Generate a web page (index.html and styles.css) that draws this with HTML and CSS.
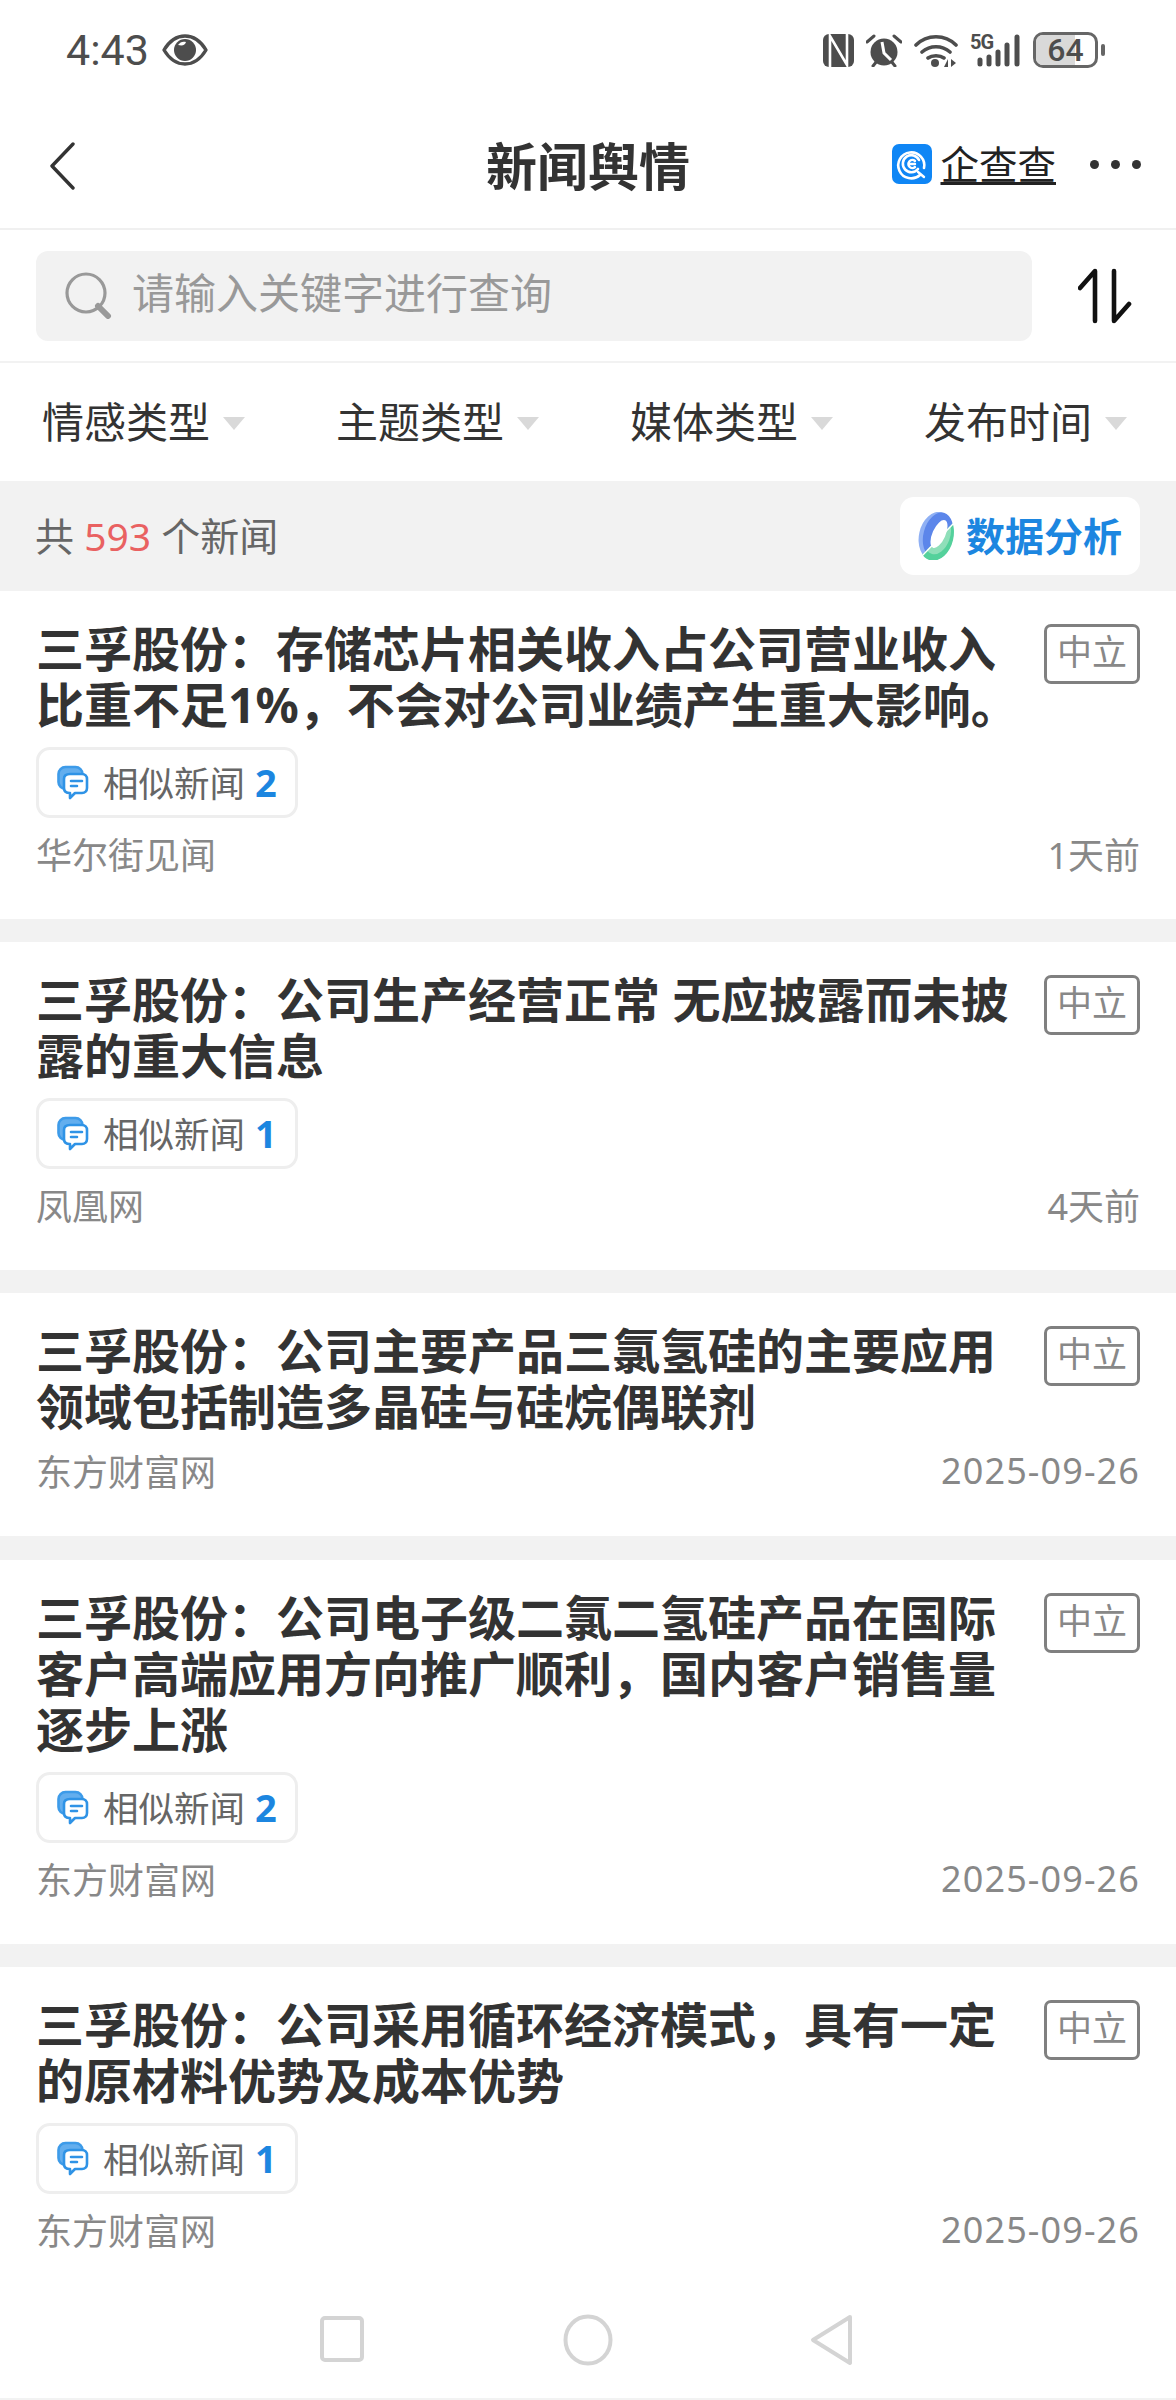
FILE: index.html
```html
<!DOCTYPE html>
<html lang="zh-CN">
<head>
    <meta charset="UTF-8">
    <meta name="viewport" content="width=device-width, initial-scale=1.0">
    <title>新闻舆情</title>
    <link rel="stylesheet" href="styles.css">
</head>
<body>
    <div class="phone">
        <div class="status-bar">
            <div class="status-left">
                <span class="clock">4:43</span>
                <svg class="eye" viewBox="0 0 46 32">
                    <path d="M2 16C8 6 15 2 23 2s15 4 21 14c-6 10-13 14-21 14S8 26 2 16z" fill="#fff" stroke="#4d4d4d" stroke-width="3.4" stroke-linejoin="round"/>
                    <circle cx="23" cy="16" r="11" fill="#4d4d4d"/>
                    <path d="M16 11c2-3 5-4 8-3-1 3-3 4-8 3z" fill="#fff"/>
                </svg>
            </div>
            <div class="status-right">
                <svg class="st-nfc" viewBox="0 0 31 33">
                    <rect width="31" height="33" rx="6" fill="#4d4d4d"/>
                    <path d="M7 33V2l17 29V0" fill="none" stroke="#fff" stroke-width="2.6"/>
                </svg>
                <svg class="st-alarm" viewBox="0 0 36 33">
                    <circle cx="18" cy="18" r="13.5" fill="#4d4d4d"/>
                    <path d="M1 8l7-6M35 8l-7-6M7 32l4-5M29 32l-4-5" stroke="#4d4d4d" stroke-width="3" stroke-linecap="round"/>
                    <path d="M16 8l2 11 7 7" fill="none" stroke="#fff" stroke-width="3"/>
                </svg>
                <svg class="st-wifi" viewBox="0 0 44 33">
                    <path d="M2 11c11-11 29-11 40 0M8 18c8-7 20-7 28 0M14 24c4-3 12-3 16 0" fill="none" stroke="#4d4d4d" stroke-width="3.6" stroke-linecap="round"/>
                    <circle cx="21" cy="29" r="4" fill="#4d4d4d"/>
                    <path d="M34 33v-8l-4 8zM37 25v8l5-4z" fill="#4d4d4d"/>
                </svg>
                <div class="st-signal">
                    <span class="st-5g">5G</span>
                    <svg viewBox="0 0 50 33">
                        <path d="M10 26v4M19 23v7M28 18v12M37 11v19M47 3v27" stroke="#4d4d4d" stroke-width="5" stroke-linecap="round"/>
                    </svg>
                </div>
                <div class="battery">
                    <div class="battery-body">
                        <div class="battery-fill"></div>
                        <span class="battery-level">64</span>
                    </div>
                    <div class="battery-cap"></div>
                </div>
            </div>
        </div>

        <div class="nav-bar">
            <svg class="back" viewBox="0 0 28 48">
                <path d="M25 2L4 24l21 22" fill="none" stroke="#333" stroke-width="3.4" stroke-linecap="round" stroke-linejoin="round"/>
            </svg>
            <h1 class="nav-title">新闻舆情</h1>
            <div class="nav-right">
                <svg class="qcc-logo" viewBox="0 0 40 40">
                    <rect width="40" height="40" rx="7" fill="#0f86f5"/>
                    <path d="M28 31a13 13 0 1 1 4-7" fill="none" stroke="#fff" stroke-width="2.6" stroke-linecap="round"/>
                    <path d="M26 25a8.5 8.5 0 1 1 1-9" fill="none" stroke="#fff" stroke-width="2.6" stroke-linecap="round"/>
                    <path d="M23 17a4 4 0 1 0 0 6M18 20h5M26 28l6 5" fill="none" stroke="#fff" stroke-width="2.4" stroke-linecap="round"/>
                </svg>
                <span class="qcc-name">企查查</span>
                <div class="dots"><i></i><i></i><i></i></div>
            </div>
        </div>

        <div class="search-row">
            <div class="search-box">
                <svg class="search-icon" viewBox="0 0 47 47">
                    <circle cx="21" cy="21" r="19" fill="none" stroke="#999" stroke-width="3.2"/>
                    <path d="M33 34l10 10" stroke="#999" stroke-width="6" stroke-linecap="round"/>
                </svg>
                <span class="search-hint">请输入关键字进行查询</span>
            </div>
            <svg class="sort-icon" viewBox="0 0 54 56">
                <path d="M17 53V3L2 20M36 3v50l15-17" fill="none" stroke="#111" stroke-width="4.6" stroke-linecap="round" stroke-linejoin="round"/>
            </svg>
        </div>

        <div class="filters">
            <div class="filter"><span>情感类型</span><i class="caret"></i></div>
            <div class="filter"><span>主题类型</span><i class="caret"></i></div>
            <div class="filter"><span>媒体类型</span><i class="caret"></i></div>
            <div class="filter"><span>发布时间</span><i class="caret"></i></div>
        </div>

        <div class="count-bar">
            <div class="count-text">共 <em>593</em> 个新闻</div>
            <div class="analysis-btn">
                <svg class="analysis-logo" viewBox="0 0 38 48">
                    <defs>
                        <clipPath id="ringLow"><polygon points="0,48 38,9 38,48"/></clipPath>
                    </defs>
                    <ellipse cx="19" cy="24" rx="17" ry="24.5" transform="rotate(13 19 24)" fill="#8fb0f4"/>
                    <ellipse cx="21" cy="23" rx="14.5" ry="23" transform="rotate(15 21 23)" fill="#5c86ea"/>
                    <g clip-path="url(#ringLow)">
                        <ellipse cx="19" cy="24" rx="17.5" ry="25" transform="rotate(13 19 24)" fill="#54d19b"/>
                        <ellipse cx="21" cy="24" rx="12" ry="19" transform="rotate(20 21 24)" fill="#8fdfb9"/>
                    </g>
                    <ellipse cx="22" cy="22" rx="6.5" ry="15" transform="rotate(24 22 22)" fill="#fff"/>
                    <path d="M3 46L37 11" stroke="#fff" stroke-width="1.4"/>
                </svg>
                <span>数据分析</span>
            </div>
        </div>

        <div class="news-list">
            <div class="news-card">
                <div class="news-top">
                    <div class="news-title">三孚股份：存储芯片相关收入占公司营业收入比重不足1%，不会对公司业绩产生重大影响。</div>
                    <div class="tag">中立</div>
                </div>
                <div class="similar">
                    <svg class="similar-icon" viewBox="0 0 34 36"><use href="#bubble"/></svg>
                    <span>相似新闻</span><b>2</b>
                </div>
                <div class="news-meta"><span>华尔街见闻</span><span>1天前</span></div>
            </div>
            <div class="news-card">
                <div class="news-top">
                    <div class="news-title">三孚股份：公司生产经营正常 无应披露而未披露的重大信息</div>
                    <div class="tag">中立</div>
                </div>
                <div class="similar">
                    <svg class="similar-icon" viewBox="0 0 34 36"><use href="#bubble"/></svg>
                    <span>相似新闻</span><b>1</b>
                </div>
                <div class="news-meta"><span>凤凰网</span><span>4天前</span></div>
            </div>
            <div class="news-card news-card-short">
                <div class="news-top">
                    <div class="news-title">三孚股份：公司主要产品三氯氢硅的主要应用领域包括制造多晶硅与硅烷偶联剂</div>
                    <div class="tag">中立</div>
                </div>
                <div class="news-meta"><span>东方财富网</span><span class="news-date">2025-09-26</span></div>
            </div>
            <div class="news-card">
                <div class="news-top">
                    <div class="news-title">三孚股份：公司电子级二氯二氢硅产品在国际客户高端应用方向推广顺利，国内客户销售量逐步上涨</div>
                    <div class="tag">中立</div>
                </div>
                <div class="similar">
                    <svg class="similar-icon" viewBox="0 0 34 36"><use href="#bubble"/></svg>
                    <span>相似新闻</span><b>2</b>
                </div>
                <div class="news-meta"><span>东方财富网</span><span class="news-date">2025-09-26</span></div>
            </div>
            <div class="news-card news-card-last">
                <div class="news-top">
                    <div class="news-title">三孚股份：公司采用循环经济模式，具有一定的原材料优势及成本优势</div>
                    <div class="tag">中立</div>
                </div>
                <div class="similar">
                    <svg class="similar-icon" viewBox="0 0 34 36"><use href="#bubble"/></svg>
                    <span>相似新闻</span><b>1</b>
                </div>
                <div class="news-meta"><span>东方财富网</span><span class="news-date">2025-09-26</span></div>
            </div>
        </div>

        <div class="system-nav">
            <svg class="sys-square" viewBox="0 0 44 46"><rect x="2" y="2" width="40" height="42" rx="3" fill="none" stroke="#d4d4d4" stroke-width="4"/></svg>
            <svg class="sys-circle" viewBox="0 0 50 52"><ellipse cx="25" cy="26" rx="22.5" ry="23.5" fill="none" stroke="#d4d4d4" stroke-width="4"/></svg>
            <svg class="sys-back" viewBox="0 0 44 52"><path d="M40 3L3 26l37 23z" fill="none" stroke="#d4d4d4" stroke-width="4" stroke-linejoin="round"/></svg>
        </div>
    </div>

    <!-- shared speech bubble for the similar-news chips -->
    <svg class="defs" width="0" height="0">
        <symbol id="bubble" viewBox="0 0 34 36">
            <rect x="2.5" y="2" width="24" height="22" rx="7" fill="#63aeee" stroke="#3d9be9" stroke-width="2.6"/>
            <path d="M14 9h12c3 0 5 2 5 5v9c0 3-2 5-5 5h-7l-5 5v-5c-4 0-6-2-6-5v-9c0-3 2-5 6-5z" fill="#fff" stroke="#2f93e6" stroke-width="2.6" stroke-linejoin="round"/>
            <path d="M15 16h11M15 21h6" stroke="#2f93e6" stroke-width="2.6" stroke-linecap="round"/>
        </symbol>
    </svg>
</body>
</html>
```

FILE: styles.css
```css
* {
    box-sizing: border-box;
}
body {
    margin: 0;
    background-color: #fff;
    font-family: "Noto Sans", "Noto Sans CJK SC", sans-serif;
    color: #333;
}
.phone {
    width: 1176px;
    height: 2400px;
    overflow: hidden;
    display: flex;
    flex-direction: column;
}

/* status bar */
.status-bar {
    height: 100px;
    padding: 0 71px 0 66px;
    display: flex;
    justify-content: space-between;
    align-items: center;
}
.status-left {
    display: flex;
    align-items: center;
    gap: 13px;
}
.clock {
    font-family: Roboto, sans-serif;
    font-size: 43px;
    line-height: 1;
    color: #4d4d4d;
}
.eye {
    width: 46px;
    height: 32px;
}
.status-right {
    display: flex;
    align-items: center;
}
.st-nfc {
    width: 31px;
    height: 33px;
    margin-right: 12px;
}
.st-alarm {
    width: 36px;
    height: 33px;
    margin-right: 12px;
}
.st-wifi {
    width: 44px;
    height: 33px;
    margin-right: 12px;
}
.st-signal {
    position: relative;
    width: 50px;
    height: 33px;
    margin-right: 13px;
}
.st-signal svg {
    display: block;
    width: 50px;
    height: 33px;
}
.st-5g {
    position: absolute;
    left: 0;
    top: -2px;
    font-family: Roboto, sans-serif;
    font-size: 20px;
    font-weight: 700;
    line-height: 20px;
    letter-spacing: -1px;
    color: #4d4d4d;
}
.battery {
    display: flex;
    align-items: center;
    gap: 3px;
}
.battery-body {
    position: relative;
    width: 65px;
    height: 36px;
    border: 3px solid #666;
    border-radius: 10px;
    overflow: hidden;
    display: flex;
    align-items: center;
    justify-content: center;
}
.battery-fill {
    position: absolute;
    left: 0;
    top: 0;
    bottom: 0;
    width: 66%;
    background-color: #d9d9d9;
}
.battery-level {
    position: relative;
    font-family: Roboto, sans-serif;
    font-size: 32px;
    font-weight: 500;
    color: #4d4d4d;
}
.battery-cap {
    width: 4px;
    height: 12px;
    border-radius: 2px;
    background-color: #666;
}

/* title bar */
.nav-bar {
    position: relative;
    height: 130px;
    padding: 0 35px 0 48px;
    border-bottom: 2px solid #f0f0f0;
    display: flex;
    justify-content: space-between;
    align-items: center;
}
.back {
    width: 28px;
    height: 48px;
    margin-top: 3px;
}
.nav-title {
    position: absolute;
    left: 0;
    right: 0;
    margin: 0;
    text-align: center;
    font-size: 51px;
    font-weight: 700;
    color: #333;
}
.nav-right {
    display: flex;
    align-items: center;
}
.qcc-logo {
    width: 40px;
    height: 40px;
    margin-right: 8px;
}
.qcc-name {
    font-size: 38.5px;
    line-height: 40px;
    color: #222;
    text-decoration: underline;
    text-underline-offset: 3px;
    margin-right: 34px;
}
.dots {
    display: flex;
    gap: 12px;
}
.dots i {
    width: 9px;
    height: 9px;
    border-radius: 50%;
    background-color: #333;
}

/* search */
.search-row {
    height: 133px;
    padding: 0 44px 0 36px;
    border-bottom: 2px solid #f2f2f2;
    display: flex;
    justify-content: space-between;
    align-items: center;
}
.search-box {
    width: 996px;
    height: 90px;
    padding-left: 29px;
    border-radius: 12px;
    background-color: #f2f2f2;
    display: flex;
    align-items: center;
    gap: 20px;
}
.search-icon {
    width: 47px;
    height: 47px;
}
.search-hint {
    font-size: 42px;
    line-height: 50px;
    padding-bottom: 6px;
    color: #999;
}
.sort-icon {
    width: 54px;
    height: 56px;
}

/* filters */
.filters {
    height: 118px;
    display: flex;
}
.filter {
    flex: 1;
    display: flex;
    align-items: center;
    justify-content: center;
    gap: 13px;
    padding-right: 7px;
    font-size: 42px;
    color: #333;
}
.filter span {
    padding-bottom: 6px;
}
.caret {
    width: 0;
    height: 0;
    border-left: 11px solid transparent;
    border-right: 11px solid transparent;
    border-top: 13px solid #d9d9d9;
    margin-top: 2px;
}

/* result count */
.count-bar {
    height: 110px;
    padding: 0 36px 0 35px;
    background-color: #f2f2f2;
    display: flex;
    justify-content: space-between;
    align-items: center;
}
.count-text {
    font-size: 39px;
    padding-bottom: 4px;
    color: #666;
}
.count-text em {
    font-style: normal;
    color: #e96161;
}
.analysis-btn {
    width: 240px;
    height: 78px;
    padding-left: 17px;
    border-radius: 14px;
    background-color: #fff;
    display: flex;
    align-items: center;
    gap: 11px;
    font-size: 39px;
    font-weight: 700;
    color: #1c86e0;
}
.analysis-btn span {
    padding-bottom: 4px;
}
.analysis-logo {
    width: 38px;
    height: 48px;
}

/* news cards */
.news-list {
    flex: 1;
    background-color: #f2f2f2;
    min-height: 0;
}
.news-card {
    background-color: #fff;
    padding: 30px 36px 39px 36px;
    margin-bottom: 23px;
}
.news-card-short {
    margin-bottom: 24px;
}
.news-card-last {
    margin-bottom: 0;
    height: 431px;
}
.news-top {
    display: flex;
    justify-content: space-between;
    align-items: flex-start;
}
.news-title {
    width: 1000px;
    font-size: 48px;
    font-weight: 700;
    line-height: 56px;
    color: #333;
}
.tag {
    width: 96px;
    height: 60px;
    margin-top: 3px;
    border: 3px solid #808080;
    border-radius: 7px;
    text-align: center;
    font-size: 35px;
    line-height: 50px;
    color: #888;
}
.similar {
    width: 262px;
    height: 71px;
    margin-top: 14px;
    padding-left: 17px;
    border: 3px solid #eee;
    border-radius: 14px;
    display: flex;
    align-items: center;
    font-size: 35.5px;
    color: #666;
}
.similar span,
.similar b {
    padding-bottom: 2px;
}
.similar-icon {
    width: 34px;
    height: 36px;
    margin-right: 13px;
}
.similar b {
    margin-left: 10px;
    font-size: 38px;
    color: #1c86e0;
}
.news-meta {
    height: 50px;
    margin-top: 12px;
    padding-bottom: 4px;
    display: flex;
    justify-content: space-between;
    align-items: center;
    font-size: 36px;
    color: #888;
}
.news-date {
    letter-spacing: 1.1px;
}
.defs {
    position: absolute;
}

/* android nav buttons */
.system-nav {
    position: absolute;
    left: 0;
    top: 2314px;
    width: 1176px;
    height: 52px;
}
.sys-square {
    position: absolute;
    left: 320px;
    top: 2px;
    width: 44px;
    height: 46px;
}
.sys-circle {
    position: absolute;
    left: 563px;
    top: 0;
    width: 50px;
    height: 52px;
}
.sys-back {
    position: absolute;
    left: 810px;
    top: 0;
    width: 44px;
    height: 52px;
}
```
